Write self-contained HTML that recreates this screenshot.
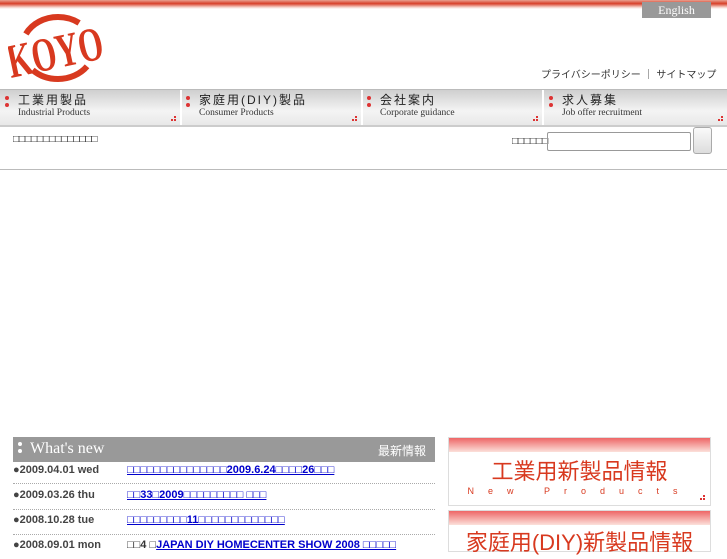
<!DOCTYPE html>
<html><head><meta charset="utf-8"><style>
body{margin:0;width:727px;height:545px;overflow:hidden;background:#fff;font-family:"Liberation Sans","Noto Sans CJK JP",sans-serif;position:relative}
.a{position:absolute}
.top{left:0;top:0;width:727px;height:9px;background:linear-gradient(#e9a090,#d8402a 40%,#f5d0c8 80%,#fff)}
.eng{left:642px;top:2px;width:69px;height:16px;background:#999;color:#fff;font-size:12px;text-align:center;line-height:16px;font-family:"Liberation Serif",serif}
.nav{left:0;top:89px;width:727px;height:35px;background:linear-gradient(#cfcfcf,#f4f4f4 60%,#e8e8e8);border-top:1px solid #bbb;border-bottom:2px solid #ccc}
.ni{position:absolute;top:0;height:35px;width:180px;border-right:2px solid #fff}
.ni .j{position:absolute;left:18px;top:3px;font-size:12px;letter-spacing:2px;color:#222;line-height:14px}
.ni .e{position:absolute;left:18px;top:18px;font-size:9.5px;color:#333;font-family:"Liberation Serif",serif;line-height:11px}
.ni .d{position:absolute;left:5px;top:6px;width:4px;height:4px;border-radius:2px;background:#d33;box-shadow:0 7px 0 #d33}
.ni .s{position:absolute;right:4px;bottom:4px;width:2px;height:2px;background:#d33;box-shadow:-3px 0 0 #d33,0 -3px 0 #d33}
.wn{left:13px;top:437px;width:422px;height:25px;background:#999;color:#fff}
.row{left:13px;width:422px;height:25px;border-bottom:1px dotted #aaa;font-size:11px;font-weight:bold;color:#444}
.row a{color:#00c;text-decoration:underline;position:absolute;left:114px;top:0}
.box{left:448px;width:261px;border:1px solid #ddd;background:#fff}
.box .g{height:14px;background:linear-gradient(#e66,#fbe0da)}
</style></head><body>
<div class="a top"></div>
<div class="a eng">English</div>
<svg class="a" style="left:8px;top:12px" width="94" height="70" viewBox="0 0 94 70">
<ellipse cx="50" cy="36" rx="36" ry="31" fill="none" stroke="#d8391f" stroke-width="6" stroke-dasharray="60 40" stroke-dashoffset="-20"/>
<text x="0" y="0" font-family="Liberation Serif,serif" font-weight="bold" font-size="48" fill="#d8391f" transform="translate(3 66) rotate(-12) scale(0.66 1)">KOYO</text>
</svg>
<div class="a" style="left:541px;top:66px;font-size:10px;color:#333">プライバシーポリシー ｜ サイトマップ</div>
<div class="a nav">
<div class="ni" style="left:0"><i class="d"></i><span class="j">工業用製品</span><span class="e">Industrial Products</span><i class="s"></i></div>
<div class="ni" style="left:181px"><i class="d"></i><span class="j">家庭用(DIY)製品</span><span class="e">Consumer Products</span><i class="s"></i></div>
<div class="ni" style="left:362px"><i class="d"></i><span class="j">会社案内</span><span class="e">Corporate guidance</span><i class="s"></i></div>
<div class="ni" style="left:544px;width:183px;border:0"><i class="d"></i><span class="j">求人募集</span><span class="e">Job offer recruitment</span><i class="s"></i></div>
</div>
<div class="a" style="left:13px;top:134px;font-size:10px;color:#222">□□□□□□□□□□□□□□</div>
<div class="a" style="left:512px;top:136px;font-size:10px;color:#222">□□□□□□</div>
<div class="a" style="left:547px;top:132px;width:142px;height:17px;border:1px solid #999;border-radius:2px"></div>
<div class="a" style="left:693px;top:127px;width:17px;height:25px;border:1px solid #aaa;border-radius:3px;background:linear-gradient(#fafafa,#ddd)"></div>
<div class="a" style="left:0;top:169px;width:727px;height:1px;background:#bbb"></div>
<div class="a wn"><i class="a" style="left:5px;top:5px;width:4px;height:4px;border-radius:2px;background:#fff;box-shadow:0 7px 0 #fff"></i><span class="a" style="left:17px;top:3px;font-size:16px;font-family:'Liberation Serif',serif">What's new</span><span class="a" style="right:9px;top:5px;font-size:12px">最新情報</span></div>
<div class="a row" style="top:462px;height:21px;line-height:16px">●2009.04.01 wed<a>□□□□□□□□□□□□□□□2009.6.24□□□□26□□□</a></div>
<div class="a row" style="top:484px;line-height:22px">●2009.03.26 thu<a>□□33□2009□□□□□□□□□ □□□</a></div>
<div class="a row" style="top:509px;line-height:22px">●2008.10.28 tue<a>□□□□□□□□□11□□□□□□□□□□□□□</a></div>
<div class="a row" style="top:534px;line-height:22px;border:0">●2008.09.01 mon<a style="color:#333;text-decoration:none">□□4 □<span style="color:#00c;text-decoration:underline">JAPAN DIY HOMECENTER SHOW 2008 □□□□□</span></a></div>
<div class="a box" style="top:437px;height:67px"><div class="g"></div>
<div style="text-align:center;color:#d8391f;font-size:22px;margin-top:2px">工業用新製品情報</div>
<div style="text-align:center;color:#d8391f;font-size:9px;letter-spacing:14px;margin-top:0">New Products</div>
<i class="a" style="right:5px;bottom:5px;width:2px;height:2px;background:#d33;box-shadow:-3px 0 0 #d33,0 -3px 0 #d33"></i></div>
<div class="a box" style="top:510px;height:40px"><div class="g"></div>
<div style="text-align:center;color:#d8391f;font-size:22px;margin-top:0">家庭用(DIY)新製品情報</div></div>
</body></html>
